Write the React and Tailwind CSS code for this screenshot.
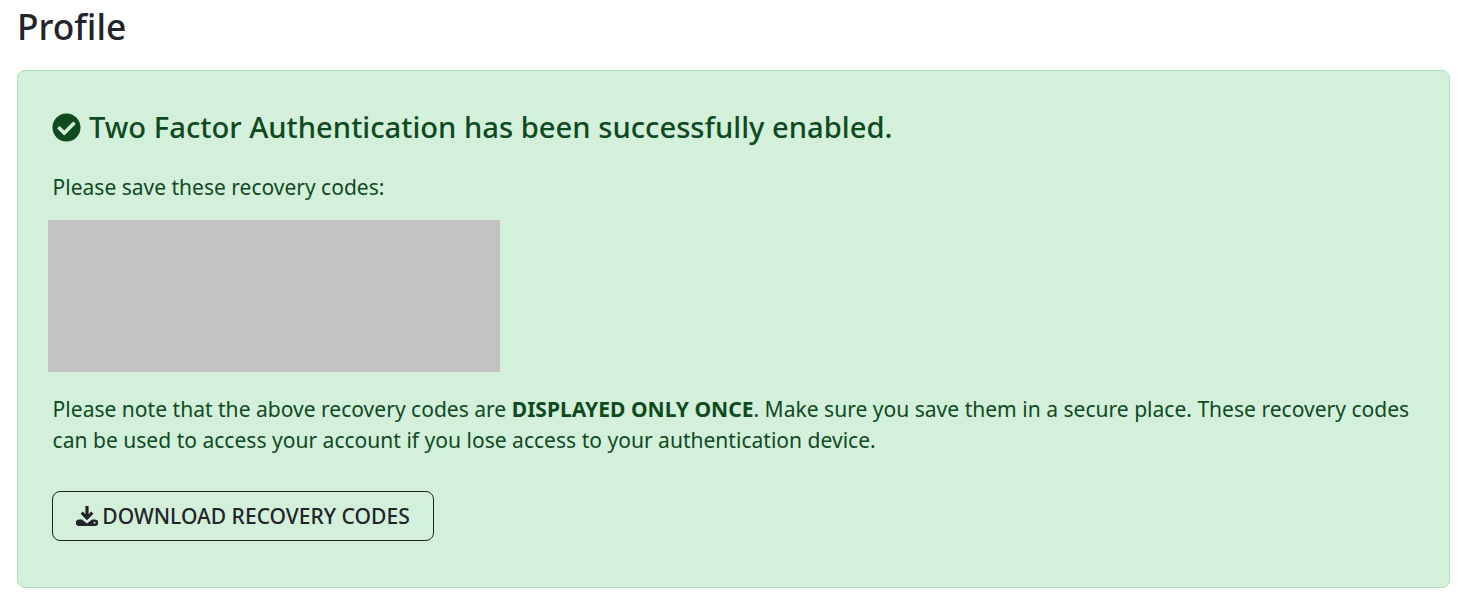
import { FaCheckCircle } from 'react-icons/fa';

export default function App() {
  return (
    <div className="h-[603px] overflow-hidden bg-white px-[17px] font-['Noto_Sans',sans-serif] text-[#212529]">
      <h1 className="flex h-[70px] items-start pt-[3px] text-[35.3px] leading-[46px] font-medium">Profile</h1>

      <div className="h-[518px] w-[1433px] rounded-lg border border-[#a8e0b8] bg-[#d3f0db] px-[34px] pt-[35px] text-[#0f4a1f]">
        <h4 className="flex h-[42px] items-center gap-2 text-[29.2px] leading-[42px] font-medium">
          <FaCheckCircle className="h-[29px] w-[29px] shrink-0" aria-hidden />
          Two Factor Authentication has been successfully enabled.
        </h4>

        <p className="mt-[24px] pl-[0.6px] text-[21px] leading-[30px]">Please save these recovery codes:</p>

        <div className="mt-[18px] -ml-[4px] h-[152px] w-[452px] bg-[#c2c2c2]" />

        <p className="mt-[21px] pl-[0.6px] text-[21.05px] leading-[31px]">
          Please note that the above recovery codes are <strong className="font-bold">DISPLAYED ONLY ONCE</strong>. Make sure you save them in a secure place. These recovery codes can be used to access your account if you lose access to your authentication device.
        </p>

        <button
          type="button"
          className="mt-[36px] flex h-[50px] w-[382px] items-center justify-center gap-1 rounded-lg border border-[#212529] text-[21.05px] font-medium text-[#212529]"
        >
          <svg viewBox="0 0 22 22" className="h-[22px] w-[22px]" fill="currentColor" aria-hidden>
            <path d="M9.4 1h3.2v8.2l2.6-2.6 2.2 2.2-6.4 6.4-6.4-6.4 2.2-2.2 2.6 2.6z" />
            <path fillRule="evenodd" d="M3 14.5h3l5 4 5-4h3a3 3 0 0 1 0 6.5H3a3 3 0 0 1 0-6.5zm15.5 2.3a1 1 0 1 0 0 2 1 1 0 0 0 0-2z" />
          </svg>
          DOWNLOAD RECOVERY CODES
        </button>
      </div>
    </div>
  );
}
